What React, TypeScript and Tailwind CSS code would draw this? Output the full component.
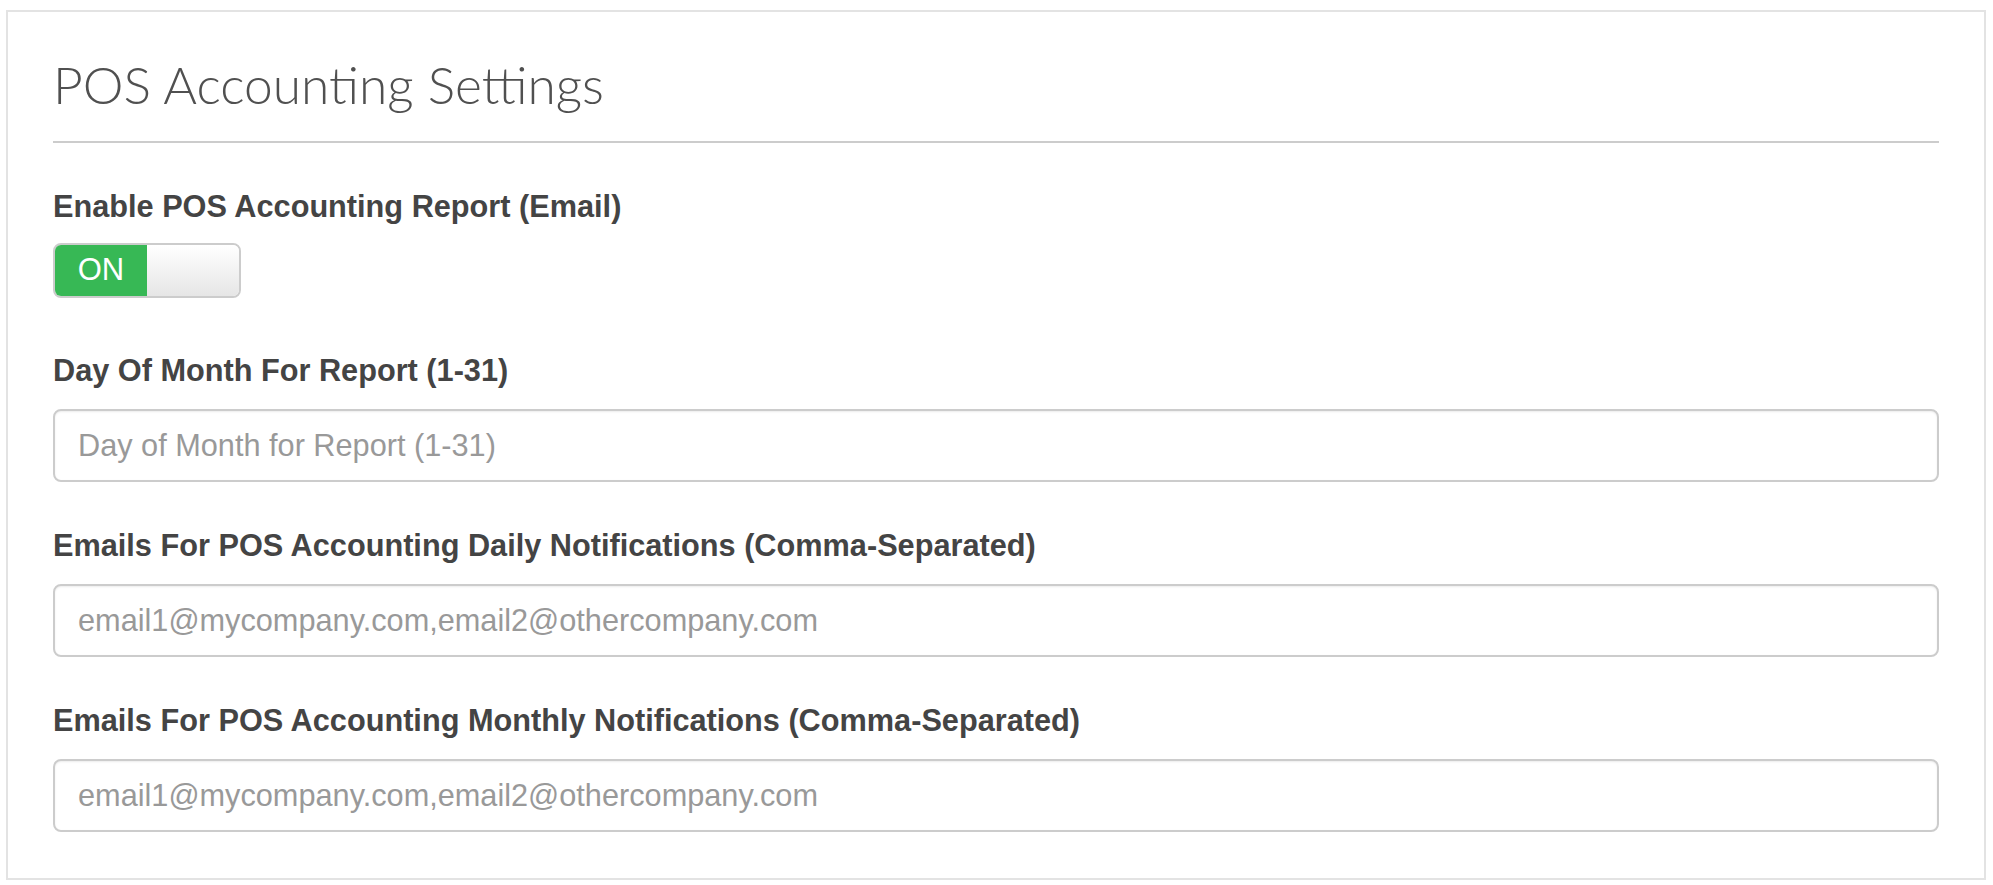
import React, { useState } from "react";

const labelCls =
  "block text-[30.7px] leading-[30px] font-bold text-[#444444] font-['Liberation_Sans',Arial,sans-serif]";
const inputCls =
  "w-full h-[73px] rounded-[8px] border-2 border-[#cccccc] bg-white px-[23px] text-[30.7px] text-[#555555] font-['Liberation_Sans',Arial,sans-serif] shadow-[inset_0_1px_2px_rgba(0,0,0,0.08)] outline-none placeholder:text-[#999999]";

const Toggle = ({ on, onChange }: { on: boolean; onChange: (v: boolean) => void }) => (
  <button
    type="button"
    onClick={() => onChange(!on)}
    className="flex h-[55px] w-[188px] overflow-hidden rounded-[8px] border-2 border-[#cccccc] bg-white p-0"
  >
    <span className="flex h-full w-[92px] items-center justify-center bg-[#37b855] text-[31px] text-white font-['Liberation_Sans',Arial,sans-serif]">
      {on ? "ON" : ""}
    </span>
    <span className="h-full flex-1 bg-gradient-to-b from-white to-[#e6e6e6]" />
  </button>
);

const App = () => {
  const [enabled, setEnabled] = useState(true);
  const [day, setDay] = useState("");
  const [daily, setDaily] = useState("");
  const [monthly, setMonthly] = useState("");

  return (
    <div className="min-h-screen bg-white pl-[6px] pr-[7px] pt-[10px]">
      <div className="border-2 border-[#e3e3e3] bg-white px-[45px] pt-[42px] pb-[46px]">
        <h1 className="text-[51.5px] leading-[61px] font-light text-[#505050] font-['Lato',sans-serif]">
          POS Accounting Settings
        </h1>
        <div className="mt-[26px] mb-[49px] h-[2px] bg-[#cccccc]" />

        <div className="mb-[58px]">
          <label className={`${labelCls} mb-[21px]`}>Enable POS Accounting Report (Email)</label>
          <Toggle on={enabled} onChange={setEnabled} />
        </div>

        <div className="mb-[49px]">
          <label className={`${labelCls} mb-[23px]`}>Day Of Month For Report (1-31)</label>
          <input
            className={inputCls}
            value={day}
            onChange={(e) => setDay(e.target.value)}
            placeholder="Day of Month for Report (1-31)"
          />
        </div>

        <div className="mb-[49px]">
          <label className={`${labelCls} mb-[23px]`}>
            Emails For POS Accounting Daily Notifications (Comma-Separated)
          </label>
          <input
            className={inputCls}
            value={daily}
            onChange={(e) => setDaily(e.target.value)}
            placeholder="email1@mycompany.com,email2@othercompany.com"
          />
        </div>

        <div>
          <label className={`${labelCls} mb-[23px]`}>
            Emails For POS Accounting Monthly Notifications (Comma-Separated)
          </label>
          <input
            className={inputCls}
            value={monthly}
            onChange={(e) => setMonthly(e.target.value)}
            placeholder="email1@mycompany.com,email2@othercompany.com"
          />
        </div>
      </div>
    </div>
  );
};

export default App;
